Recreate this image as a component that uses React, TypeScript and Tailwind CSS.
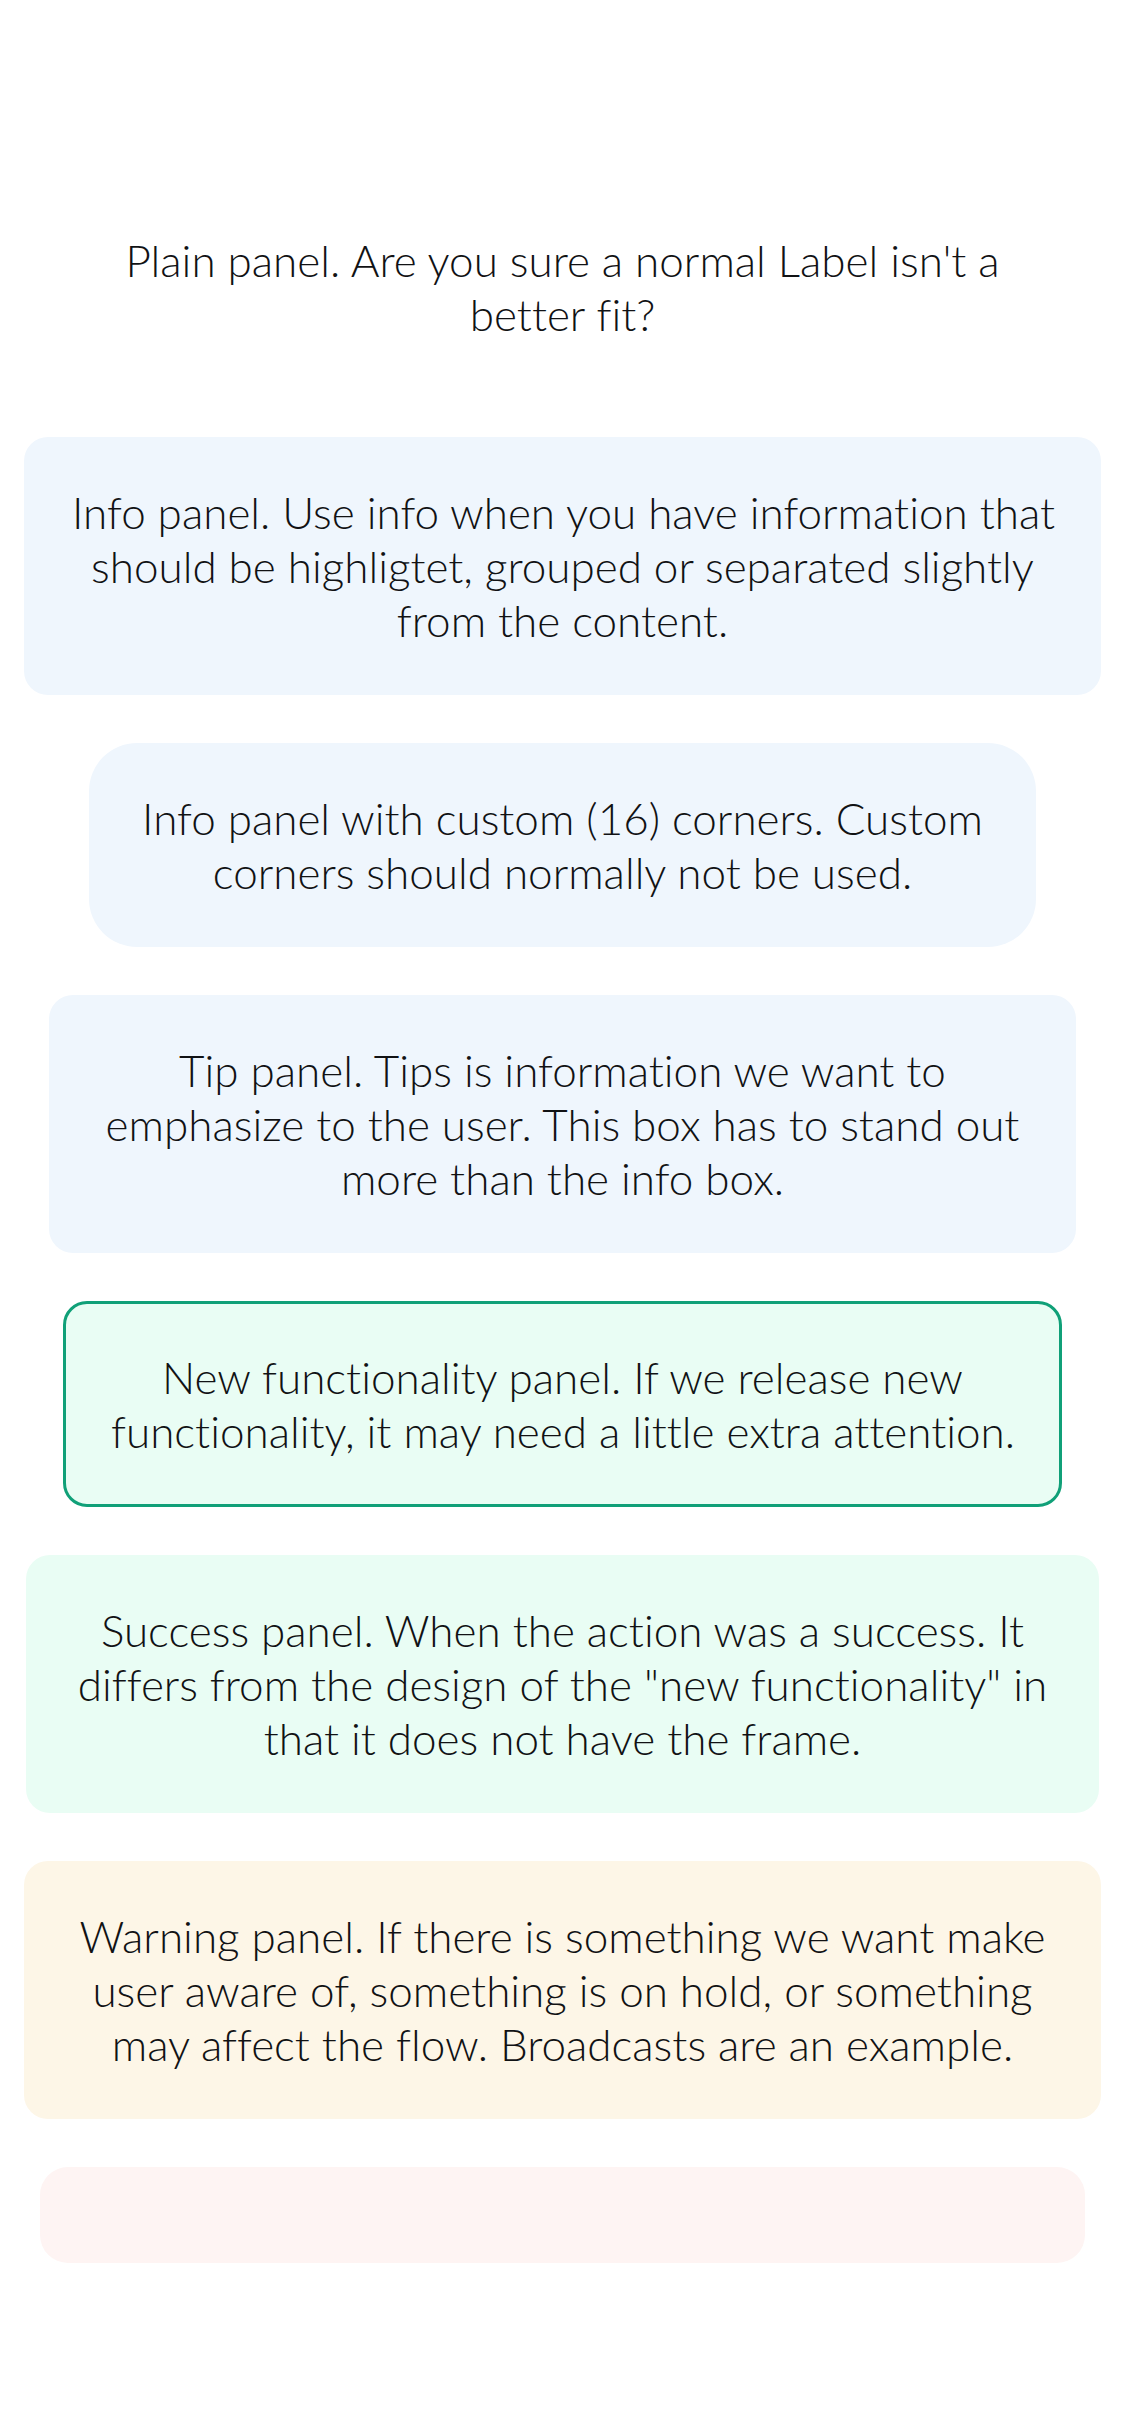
const font = { fontFamily: "Lato, 'Noto Sans', sans-serif" };

function Lines({ lines }: { lines: string[] }) {
  return (
    <p className="text-center text-[44px] leading-[54px] font-light text-[#111214] [font-variant-ligatures:none]">
      {lines.map((l, i) => (
        <span key={i} className="block whitespace-nowrap">
          {l}
        </span>
      ))}
    </p>
  );
}

export default function App() {
  return (
    <div className="min-h-[2436px] w-[1125px] bg-white pt-[185px]" style={font}>
      <div className="flex flex-col gap-[48px]">
        {/* Plain */}
        <div className="mx-[24px] px-[48px] py-[48px]">
          <Lines lines={["Plain panel. Are you sure a normal Label isn't a", "better fit?"]} />
        </div>

        {/* Info */}
        <div className="mx-[24px] rounded-[24px] bg-[#eff6fd] px-[48px] py-[48px]">
          <Lines
            lines={[
              "Info panel. Use info when you have information that",
              "should be highligtet, grouped or separated slightly",
              "from the content.",
            ]}
          />
        </div>

        {/* Info with custom corners */}
        <div className="mx-[89px] rounded-[48px] bg-[#eff6fd] px-[48px] py-[48px]">
          <Lines lines={["Info panel with custom (16) corners. Custom", "corners should normally not be used."]} />
        </div>

        {/* Tip */}
        <div className="mx-[49px] rounded-[24px] bg-[#eff6fd] px-[48px] py-[48px]">
          <Lines
            lines={[
              "Tip panel. Tips is information we want to",
              "emphasize to the user. This box has to stand out",
              "more than the info box.",
            ]}
          />
        </div>

        {/* New functionality */}
        <div className="mx-[63px] rounded-[24px] border-[3px] border-[#10a078] bg-[#e9fdf4] px-[45px] py-[46px]">
          <Lines
            lines={[
              "New functionality panel. If we release new",
              "functionality, it may need a little extra attention.",
            ]}
          />
        </div>

        {/* Success */}
        <div className="mx-[26px] rounded-[24px] bg-[#e9fdf4] px-[48px] py-[48px]">
          <Lines
            lines={[
              "Success panel. When the action was a success. It",
              'differs from the design of the "new functionality" in',
              "that it does not have the frame.",
            ]}
          />
        </div>

        {/* Warning */}
        <div className="mx-[24px] rounded-[24px] bg-[#fdf6e7] px-[48px] py-[48px]">
          <Lines
            lines={[
              "Warning panel. If there is something we want make",
              "user aware of, something is on hold, or something",
              "may affect the flow. Broadcasts are an example.",
            ]}
          />
        </div>

        {/* Error (empty) */}
        <div className="mx-[40px] h-[96px] rounded-[28px] bg-[#fef4f3]" />
      </div>
    </div>
  );
}
